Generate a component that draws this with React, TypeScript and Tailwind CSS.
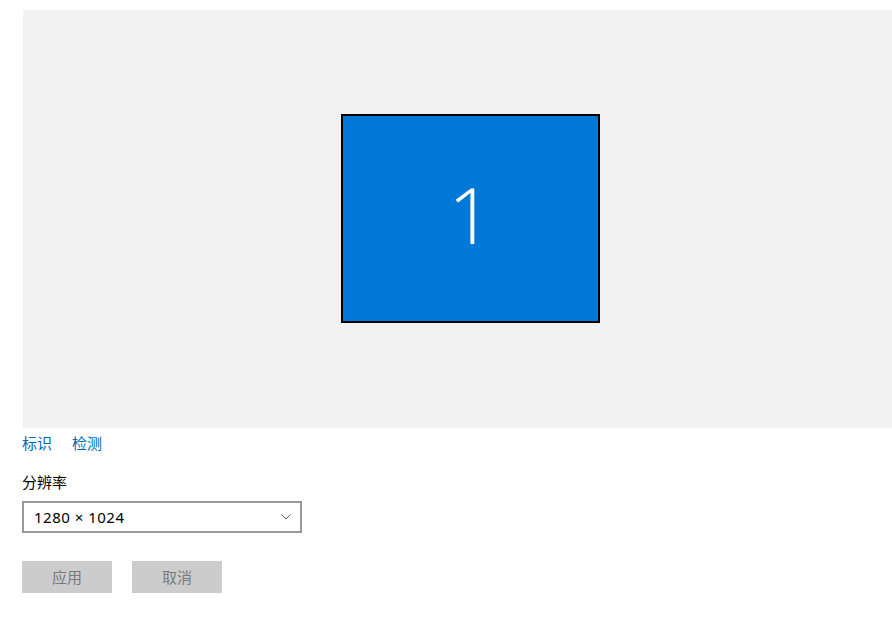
import React from 'react'

const cjk = { fontFamily: '"Segoe UI", "Noto Sans", "Noto Sans CJK SC", sans-serif' }

export default function App() {
  return (
    <div className="w-[892px] h-[637px] overflow-hidden bg-white" style={cjk}>
      <div className="ml-[23px] mt-[10px] w-[895px] h-[418px] bg-[#f2f2f2] flex items-center justify-center">
        <div className="w-[259px] h-[209px] -mt-[1px] border-2 border-black bg-[#0078d7] flex items-center justify-center">
          <span
            className="text-white text-[78px] leading-none font-light -mt-[10px]"
            style={{ fontFamily: '"Open Sans", Lato, sans-serif' }}
          >
            1
          </span>
        </div>
      </div>

      <div className="px-[22px]">
        <div className="mt-[5px] flex gap-[20px] text-[15px] leading-[20px] text-[#0067b8]">
          <span>标识</span>
          <span>检测</span>
        </div>

        <div className="mt-[19px] text-[15px] leading-[20px] text-black">分辨率</div>

        <div className="mt-[9px] w-[280px] h-[32px] border-2 border-[#999999] flex items-center justify-between pl-[10px] pr-[9px]">
          <span className="text-[15px] tracking-[0.5px] text-black">1280 × 1024</span>
          <svg width="10" height="6" viewBox="0 0 10 6" fill="none">
            <path d="M0.5 0.5 L5 5 L9.5 0.5" stroke="#5c5c5c" strokeWidth="1" />
          </svg>
        </div>

        <div className="mt-[28px] flex gap-[20px]">
          <button className="w-[90px] h-[32px] bg-[#cccccc] text-[#7a7a7a] text-[15px]">应用</button>
          <button className="w-[90px] h-[32px] bg-[#cccccc] text-[#7a7a7a] text-[15px]">取消</button>
        </div>
      </div>
    </div>
  )
}
